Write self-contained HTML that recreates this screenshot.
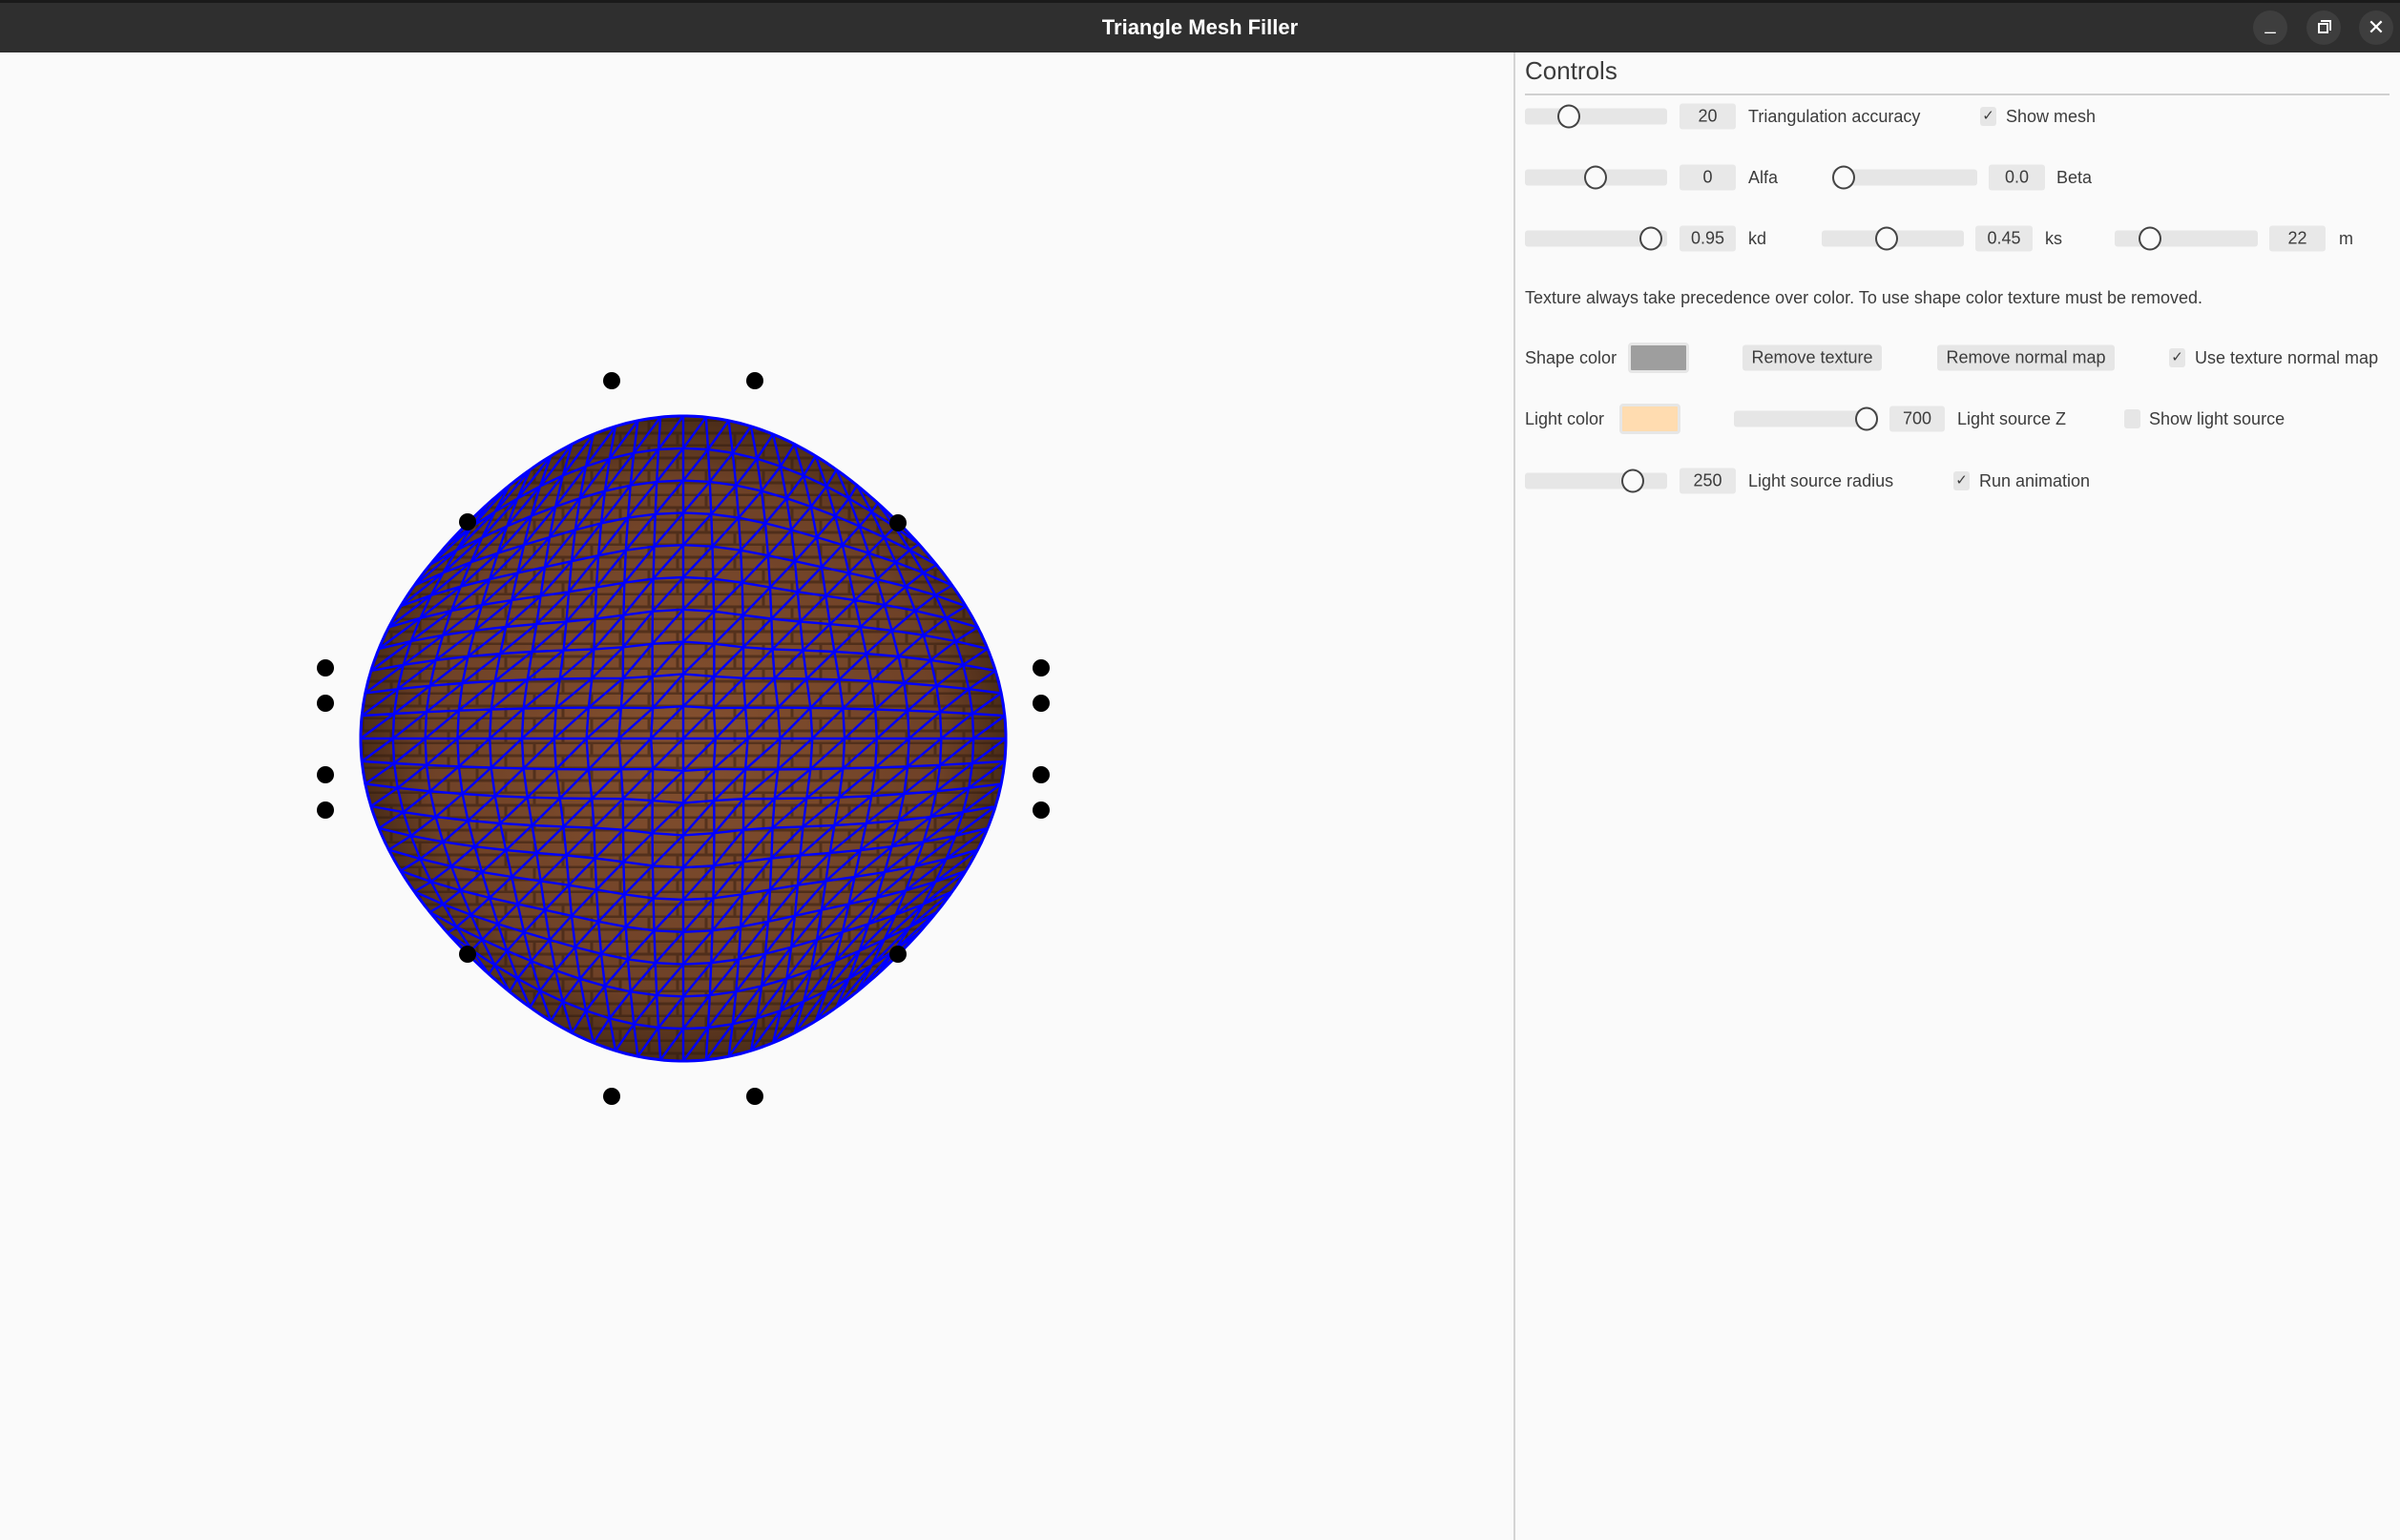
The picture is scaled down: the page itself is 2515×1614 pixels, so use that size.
<!DOCTYPE html>
<html><head><meta charset="utf-8"><style>
*{margin:0;padding:0;box-sizing:border-box}
body{width:2515px;height:1614px;background:#fafafa;font-family:"Liberation Sans",sans-serif;position:relative;overflow:hidden;color:#3c3c3c}
.bar{position:absolute;left:0;top:0;width:2515px;height:55px;background:#2f2f2f;border-top:3px solid #1a1a1a}
.title{position:absolute;top:0;left:0;width:2515px;text-align:center;line-height:58px;color:#fff;font-weight:bold;font-size:22px}
.wb{position:absolute;top:11px;width:36px;height:36px;border-radius:50%;background:#3e3e3e;color:#fff;text-align:center}
.div{position:absolute;left:1586px;top:55px;width:2px;height:1559px;background:#d4d4d4}
.a{position:absolute;font-size:18px;white-space:nowrap;line-height:24px;transform:translateY(-50%)}
.tr{position:absolute;height:17px;background:#e6e6e6;border-radius:3px;transform:translateY(-50%)}
.h{position:absolute;width:24px;height:25px;border:2px solid #444;border-radius:50%;background:#fafafa;transform:translate(-50%,-50%)}
.box{position:absolute;height:27px;background:#e8e8e8;border-radius:3px;transform:translateY(-50%);text-align:center;font-size:18px;line-height:27px}
.cb{position:absolute;width:17px;height:20px;background:#e6e6e6;border-radius:3px;transform:translateY(-50%);font-size:15px;line-height:20px;text-align:center}
.btn{position:absolute;height:27px;background:#e6e6e6;border-radius:3px;transform:translateY(-50%);font-size:18px;line-height:27px;text-align:center}
</style></head><body>
<div class="bar"></div><div class="title">Triangle Mesh Filler</div>
<div class="wb" style="left:2361px;line-height:28px;font-size:20px">_</div>
<div class="wb" style="left:2417px"><div style="position:absolute;left:12px;top:13px;width:11px;height:11px;border:2px solid #fff"></div><div style="position:absolute;left:15px;top:10px;width:11px;height:11px;border-top:2px solid #fff;border-right:2px solid #fff"></div></div>
<div class="wb" style="left:2472px;line-height:36px;font-size:22px">✕</div>
<div class="div"></div>

<div class="a" style="left:1598px;top:74px;font-size:26px;line-height:30px">Controls</div>
<div style="position:absolute;left:1598px;top:98px;width:906px;height:2px;background:#d0d0d0"></div>

<div class="tr" style="left:1598px;top:122px;width:149px"></div><div class="h" style="left:1644px;top:122px"></div>
<div class="box" style="left:1760px;top:122px;width:59px">20</div><div class="a" style="left:1832px;top:122px">Triangulation accuracy</div>
<div class="cb" style="left:2075px;top:122px">✓</div><div class="a" style="left:2102px;top:122px">Show mesh</div>

<div class="tr" style="left:1598px;top:186px;width:149px"></div><div class="h" style="left:1672px;top:186px"></div>
<div class="box" style="left:1760px;top:186px;width:59px">0</div><div class="a" style="left:1832px;top:186px">Alfa</div>
<div class="tr" style="left:1920px;top:186px;width:152px"></div><div class="h" style="left:1932px;top:186px"></div>
<div class="box" style="left:2084px;top:186px;width:59px">0.0</div><div class="a" style="left:2155px;top:186px">Beta</div>

<div class="tr" style="left:1598px;top:250px;width:149px"></div><div class="h" style="left:1730px;top:250px"></div>
<div class="box" style="left:1760px;top:250px;width:59px">0.95</div><div class="a" style="left:1832px;top:250px">kd</div>
<div class="tr" style="left:1909px;top:250px;width:149px"></div><div class="h" style="left:1977px;top:250px"></div>
<div class="box" style="left:2070px;top:250px;width:60px">0.45</div><div class="a" style="left:2143px;top:250px">ks</div>
<div class="tr" style="left:2216px;top:250px;width:150px"></div><div class="h" style="left:2253px;top:250px"></div>
<div class="box" style="left:2378px;top:250px;width:59px">22</div><div class="a" style="left:2451px;top:250px">m</div>

<div class="a" style="left:1598px;top:312px">Texture always take precedence over color. To use shape color texture must be removed.</div>

<div class="a" style="left:1598px;top:375px">Shape color</div>
<div style="position:absolute;left:1706px;top:359px;width:64px;height:32px;background:#9e9e9e;border:3px solid #e6e6e6;border-radius:4px"></div>
<div class="btn" style="left:1826px;top:375px;width:146px">Remove texture</div>
<div class="btn" style="left:2030px;top:375px;width:186px">Remove normal map</div>
<div class="cb" style="left:2273px;top:375px">✓</div><div class="a" style="left:2300px;top:375px">Use texture normal map</div>

<div class="a" style="left:1598px;top:439px">Light color</div>
<div style="position:absolute;left:1697px;top:423px;width:64px;height:32px;background:#ffdcb0;border:3px solid #e6e6e6;border-radius:4px"></div>
<div class="tr" style="left:1817px;top:439px;width:151px"></div><div class="h" style="left:1956px;top:439px"></div>
<div class="box" style="left:1980px;top:439px;width:58px">700</div><div class="a" style="left:2051px;top:439px">Light source Z</div>
<div class="cb" style="left:2226px;top:439px"></div><div class="a" style="left:2252px;top:439px">Show light source</div>

<div class="tr" style="left:1598px;top:504px;width:149px"></div><div class="h" style="left:1711px;top:504px"></div>
<div class="box" style="left:1760px;top:504px;width:59px">250</div><div class="a" style="left:1832px;top:504px">Light source radius</div>
<div class="cb" style="left:2047px;top:504px">✓</div><div class="a" style="left:2074px;top:504px">Run animation</div>

<svg id="s" style="position:absolute;left:0;top:0" width="1586" height="1614">
<defs>
<radialGradient id="g" cx="50%" cy="50%" r="50%"><stop offset="0" stop-color="#84502f"/><stop offset="0.8" stop-color="#6e4127"/><stop offset="1" stop-color="#4a2c18"/></radialGradient>
<pattern id="br" width="60" height="26" patternUnits="userSpaceOnUse"><path d="M0 12H60M0 25H60M20 0V12M50 12V25" stroke="#2e1a0e" stroke-width="3" opacity="0.5"/></pattern>
</defs>
<g id="m"></g>
<g fill="#000">
<circle cx="641" cy="399" r="9"/><circle cx="791" cy="399" r="9"/>
<circle cx="641" cy="1149" r="9"/><circle cx="791" cy="1149" r="9"/>
<circle cx="341" cy="700" r="9"/><circle cx="341" cy="737" r="9"/><circle cx="341" cy="812" r="9"/><circle cx="341" cy="849" r="9"/>
<circle cx="1091" cy="700" r="9"/><circle cx="1091" cy="737" r="9"/><circle cx="1091" cy="812" r="9"/><circle cx="1091" cy="849" r="9"/>
<circle cx="490" cy="547" r="9"/><circle cx="941" cy="548" r="9"/><circle cx="490" cy="1000" r="9"/><circle cx="941" cy="1000" r="9"/>
</g>
</svg>
<script>
(function(){
var cx=716,cy=774,R=338,N=20,g=document.getElementById('m');
function P(u,v){var x=u*Math.sqrt(1-v*v/2),y=v*Math.sqrt(1-u*u/2);
 var r2=x*x+y*y,k=1;if(r2>0){var s2=4*x*x*y*y/(r2*r2);k=1-0.055*s2;}
 return [cx+R*x*k,cy+R*y*k];}
var d='',b='';
var M=120;for(var i=0;i<4*M;i++){var s=i/M,u,v;
 if(s<1){u=-1+2*s;v=-1}else if(s<2){u=1;v=-1+2*(s-1)}else if(s<3){u=1-2*(s-2);v=1}else{u=-1;v=1-2*(s-3)}
 var p=P(u,v);b+=(i?'L':'M')+p[0].toFixed(1)+' '+p[1].toFixed(1);}
b+='Z';
var ns='http://www.w3.org/2000/svg';
function add(dd,at){var e=document.createElementNS(ns,'path');e.setAttribute('d',dd);for(var k in at)e.setAttribute(k,at[k]);g.appendChild(e);}
add(b,{fill:'url(#g)'});add(b,{fill:'url(#br)'});
function t(a){return -1+2*a/N}
for(var j=0;j<=N;j++){for(var i=0;i<=N;i++){var p=P(t(i),t(j));d+=(i?'L':'M')+p[0].toFixed(1)+' '+p[1].toFixed(1);}
 for(var i=0;i<=N;i++){var p=P(t(j),t(i));d+=(i?'L':'M')+p[0].toFixed(1)+' '+p[1].toFixed(1);}}
for(var i=0;i<N;i++)for(var j=0;j<N;j++){var a=P(t(i),t(j+1)),c=P(t(i+1),t(j));d+='M'+a[0].toFixed(1)+' '+a[1].toFixed(1)+'L'+c[0].toFixed(1)+' '+c[1].toFixed(1);}
add(d,{fill:'none',stroke:'#0000ff','stroke-width':'2.4'});
add(b,{fill:'none',stroke:'#0000ff','stroke-width':'3'});
})();
</script>
</body></html>
